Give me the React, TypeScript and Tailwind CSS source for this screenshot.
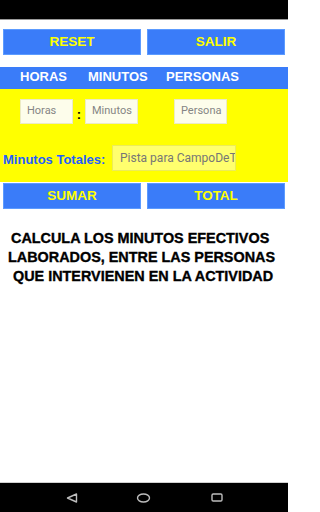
export default function App() {
  return (
    <div className="flex h-[512px] w-[288px] flex-col overflow-hidden bg-white font-['Liberation_Sans',Arial,sans-serif]">
      {/* status bar */}
      <div className="h-[20px] shrink-0 border-b border-[#9a9a9a] bg-black" />

      {/* top buttons */}
      <div className="mt-[9px] grid grid-cols-2 gap-[6px] px-[3px]">
        <button className="h-[26px] border border-[#5c9bff] bg-[#3a7cf9] text-[13.5px] font-bold text-[#ffff00]">
          RESET
        </button>
        <button className="h-[26px] border border-[#5c9bff] bg-[#3a7cf9] text-[13.5px] font-bold text-[#ffff00]">
          SALIR
        </button>
      </div>

      {/* header band */}
      <div className="mt-[12px] flex h-[22px] items-center pb-[3px] text-[13px] font-bold text-white bg-[#3a7cf9]">
        <span className="ml-[20px] w-[68px]">HORAS</span>
        <span className="w-[78px]">MINUTOS</span>
        <span>PERSONAS</span>
      </div>

      {/* yellow form */}
      <div className="h-[93px] bg-[#ffff00] pt-[10px]">
        <div className="flex items-start font-['Roboto',sans-serif] text-[11px] text-[#858585]">
          <div className="ml-[20px] h-[25px] w-[53px] overflow-hidden whitespace-nowrap border border-[#ecebc4] bg-[#fdfdeb] pl-[6px] pt-[2.5px]">
            Horas
          </div>
          <span className="mt-[9px] w-[12px] text-center font-['Liberation_Sans',sans-serif] text-[13px] font-bold leading-none text-black">
            :
          </span>
          <div className="h-[25px] w-[53px] overflow-hidden whitespace-nowrap border border-[#ecebc4] bg-[#fdfdeb] pl-[6px] pt-[2.5px]">
            Minutos
          </div>
          <div className="ml-[36px] h-[25px] w-[53px] overflow-hidden whitespace-nowrap border border-[#ecebc4] bg-[#fdfdeb] pl-[6px] pt-[2.5px]">
            Persona
          </div>
        </div>

        <div className="mt-[21px] flex items-center">
          <span className="ml-[3px] w-[109px] pt-[4px] text-[13px] font-bold text-[#1f5fff]">
            Minutos Totales:
          </span>
          <div className="h-[26px] w-[124px] overflow-hidden whitespace-nowrap border border-[#ecec58] bg-[#ffff6e] pl-[7px] pt-[3px] font-['Roboto',sans-serif] text-[12px] text-[#767676]">
            Pista para CampoDeTe
          </div>
        </div>
      </div>

      {/* bottom buttons */}
      <div className="mt-[1px] grid grid-cols-2 gap-[6px] px-[3px]">
        <button className="h-[26px] border border-[#5c9bff] bg-[#3a7cf9] text-[13.5px] font-bold text-[#ffff00]">
          SUMAR
        </button>
        <button className="h-[26px] border border-[#5c9bff] bg-[#3a7cf9] text-[13.5px] font-bold text-[#ffff00]">
          TOTAL
        </button>
      </div>

      {/* description */}
      <div className="mt-[20px] whitespace-nowrap text-[14.4px] font-bold leading-[19px] text-black [-webkit-text-stroke:0.35px_black]">
        <div className="ml-[11px]">CALCULA LOS MINUTOS EFECTIVOS</div>
        <div className="ml-[8px]">LABORADOS, ENTRE LAS PERSONAS</div>
        <div className="ml-[13px]">QUE INTERVIENEN EN LA ACTIVIDAD</div>
      </div>

      <div className="flex-1" />

      {/* navigation bar */}
      <div className="flex h-[30px] shrink-0 items-center border-t border-[#d0d0d0] bg-black">
        <svg className="ml-[66px]" width="12" height="10" viewBox="0 0 12 10" fill="none" stroke="#bdbdbd" strokeWidth="1.4">
          <path d="M1.5 5 L10.5 1 L10.5 9 Z" strokeLinejoin="round" />
        </svg>
        <svg className="ml-[58px]" width="15" height="10" viewBox="0 0 15 10" fill="none" stroke="#bdbdbd" strokeWidth="1.4">
          <ellipse cx="7.5" cy="5" rx="6" ry="4" />
        </svg>
        <svg className="ml-[60px]" width="12" height="9" viewBox="0 0 12 9" fill="none" stroke="#bdbdbd" strokeWidth="1.4">
          <rect x="1" y="1" width="10" height="7" rx="1.2" />
        </svg>
      </div>
    </div>
  );
}
